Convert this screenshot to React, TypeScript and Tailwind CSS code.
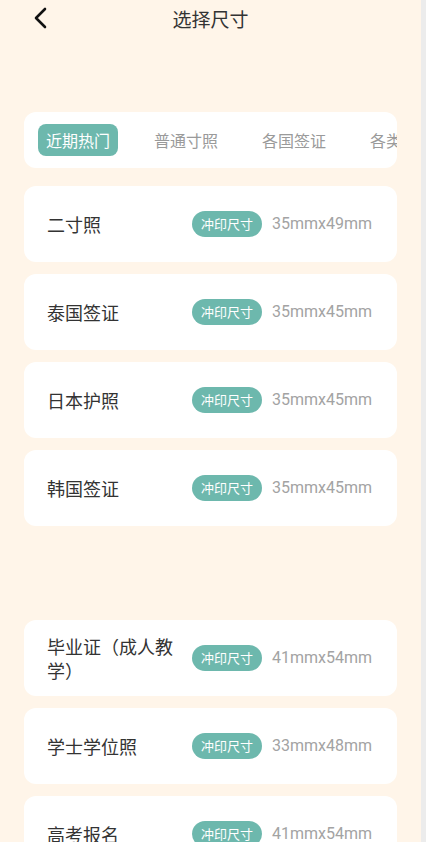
import React from 'react';

interface SizeItem {
    name: string;
    size: string;
}

const tabs = ['近期热门', '普通寸照', '各国签证', '各类证件'];

const hotItems: SizeItem[] = [
    { name: '二寸照', size: '35mmx49mm' },
    { name: '泰国签证', size: '35mmx45mm' },
    { name: '日本护照', size: '35mmx45mm' },
    { name: '韩国签证', size: '35mmx45mm' },
];

const moreItems: SizeItem[] = [
    { name: '毕业证（成人教学）', size: '41mmx54mm' },
    { name: '学士学位照', size: '33mmx48mm' },
    { name: '高考报名', size: '41mmx54mm' },
];

const cjk = { fontFamily: '"Noto Sans CJK SC", "Noto Sans", sans-serif' };

export default function App() {
    return (
        <div className="w-[426px] h-[842px] flex overflow-hidden" style={cjk}>
            <main className="w-[421px] h-full bg-[#fff5e9] flex flex-col">
                <header className="h-9 relative flex items-center justify-center shrink-0">
                    <button className="absolute left-[32px] top-[6px] w-[16px] h-[24px] flex items-center justify-center" aria-label="返回">
                        <svg width="14" height="22" viewBox="0 0 14 22" fill="none">
                            <path d="M12 2 L3 11 L12 20" stroke="#111" strokeWidth="2.6" strokeLinecap="round" strokeLinejoin="round" />
                        </svg>
                    </button>
                    <h1 className="text-[19px] text-[#333] font-normal leading-none">选择尺寸</h1>
                </header>

                <div className="mx-6 mt-[76px] h-14 bg-white rounded-[12px] overflow-hidden flex items-center pl-[14px] gap-7 shrink-0">
                    {tabs.map((t, i) => (
                        <span
                            key={t}
                            className={`shrink-0 px-2 h-8 flex items-center rounded-[8px] text-[16px] whitespace-nowrap ${
                                i === 0 ? 'bg-[#6db8ad] text-white' : 'text-[#9a9a9a]'
                            }`}
                        >
                            {t}
                        </span>
                    ))}
                </div>

                <div className="mx-6 mt-[18px] flex flex-col gap-3">
                    {hotItems.map(item => (
                        <SizeRow key={item.name} item={item} />
                    ))}
                </div>

                <div className="mx-6 mt-[94px] flex flex-col gap-3">
                    {moreItems.map(item => (
                        <SizeRow key={item.name} item={item} />
                    ))}
                </div>
            </main>
            <div className="w-[5px] h-full bg-[#ececec]" />
        </div>
    );
}

function SizeRow({ item }: { item: SizeItem }) {
    return (
        <div className="h-[76px] bg-white rounded-[12px] flex items-center pl-[23px] pr-[25px] shrink-0">
            <span className="flex-1 min-w-0 text-[18px] leading-[24px] text-[#333]">{item.name}</span>
            <div className="ml-4 flex items-center gap-[10px] shrink-0">
                <span className="h-[26px] px-[9px] rounded-full bg-[#6db8ad] text-white text-[13px] flex items-center">冲印尺寸</span>
                <span className="text-[16px] text-[#a3a3a3]" style={{ fontFamily: 'Roboto, "Noto Sans", sans-serif' }}>{item.size}</span>
            </div>
        </div>
    );
}
